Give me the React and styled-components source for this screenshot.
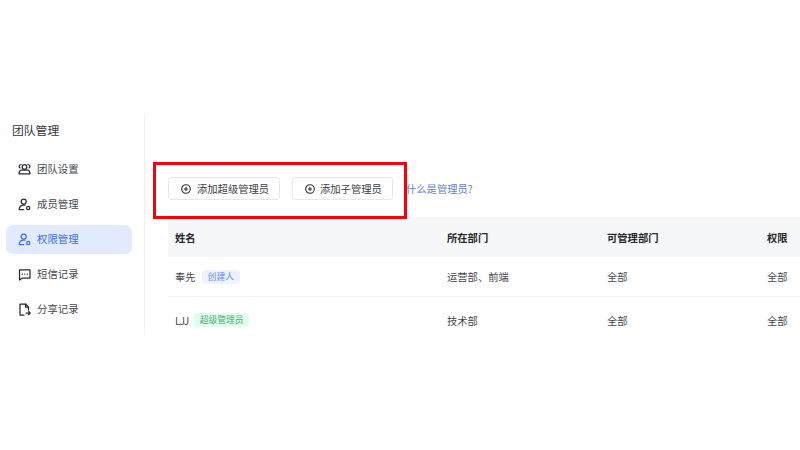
import React from "react";
import styled, { createGlobalStyle } from "styled-components";

const Global = createGlobalStyle`
  html, body { margin: 0; padding: 0; background: #fff; }
  body { font-family: "Noto Sans CJK SC", "Inter", sans-serif; width: 800px; height: 450px; overflow: hidden; }
`;
const Page = styled.div`
  display: flex; width: 800px; height: 450px; padding-top: 114px; box-sizing: border-box; overflow: hidden; position: relative;
`;
const Sidebar = styled.aside`
  width: 145px; height: 221px; flex: none; box-sizing: border-box; border-right: 1px solid #f0f1f3; padding: 0 12px 0 6px;
`;
const Title = styled.h1`
  margin: 0 0 17px 6px; padding-top: 7px; font-size: 11.8px; line-height: 17px; font-weight: 400; color: #33363c;
`;
const NavItem = styled.div`
  height: 29px; margin-bottom: 6px; display: flex; align-items: center; gap: 6px; padding-left: 12px; border-radius: 7px;
  font-size: 10.4px; color: ${p => p.$active ? "#3d6ff0" : "#45484e"};
  background: ${p => p.$active ? "#e2ebfd" : "transparent"};
  svg { width: 13px; height: 13px; flex: none; color: ${p => p.$active ? "#3d6ff0" : "#2b2d31"}; }
`;
const NavLabel = styled.span`
  position: relative; top: -1px;
`;
const Main = styled.main`
  flex: none; width: 655px; padding: 63px 0 0 23px; box-sizing: border-box;
`;
const Toolbar = styled.div`
  display: flex; align-items: center; height: 23px; margin-bottom: 17px;
`;
const Button = styled.div`
  height: 23px; box-sizing: border-box; width: ${p => p.$w}px; margin-right: 12px; border: 1px solid #e6e7ea; border-radius: 3px;
  display: flex; align-items: center; padding-left: 12px; gap: 6px; font-size: 10.3px; color: #3a3d43;
  svg { width: 10px; height: 10px; flex: none; color: #2b2d31; }
`;
const SecondButton = styled(Button)`
  gap: 5px;
`;
const HelpLink = styled.span`
  font-size: 10.3px; color: #5f80cc; margin-left: 1px;
`;
const Row = styled.div`
  display: grid; grid-template-columns: 279px 160px 160px 100px; width: 699px; height: ${p => p.$h || 40}px; align-items: center; box-sizing: border-box;
  font-size: 10.3px; color: #45484e;
  background: ${p => p.$head ? "#f6f7f9" : "transparent"};
  border-bottom: ${p => p.$line ? "1px solid #f1f2f3" : "none"};
  font-weight: ${p => p.$head ? 600 : 400};
  ${p => p.$head ? "color: #26282c;" : ""}
`;
const NameCell = styled.div`
  display: flex; align-items: center; gap: 6px; padding-left: 7px;
`;
const LatinName = styled.span`
  letter-spacing: -1px;
`;
const Cell = styled.div``;
const Tag = styled.span`
  height: 14px; line-height: 14px; padding: 0 ${p => p.$green ? 5.5 : 6}px; border-radius: 3px; font-size: 8.8px;
  color: ${p => p.$green ? "#35b56f" : "#5f8cf2"};
  background: ${p => p.$green ? "#e5fbee" : "#edf2fe"};
`;
const Annotation = styled.div`
  position: absolute; left: 153px; top: 162px; width: 254px; height: 57px; box-sizing: border-box; border: 3px solid #f5000a; pointer-events: none;
`;

const s = { fill: "none", stroke: "currentColor", strokeWidth: 1.25, strokeLinecap: "round", strokeLinejoin: "round" };
const TeamIcon = () => (
  <svg viewBox="0 0 13 13" {...s}><circle cx="6.5" cy="4" r="2.3"/><path d="M3 1.500a1.900 1.900 0 0 0-1 3.500M10 1.500a1.900 1.900 0 0 1 1 3.500M1 10.800c0-1.900.7-3.300 2.300-3.800h6.400c1.600.5 2.300 1.900 2.300 3.800H1z"/></svg>
);
const UserGearIcon = () => (
  <svg viewBox="0 0 13 13" {...s}><circle cx="5.700" cy="3.600" r="2.500"/><path d="M1.200 11.500c0-2.800 1.900-4.500 4.500-4.500.5 0 1 .1 1.400.2M1.200 11.500h4.500"/><circle cx="10.200" cy="10" r="1.600"/></svg>
);
const ChatIcon = () => (
  <svg viewBox="0 0 13 13" {...s}><path d="M1.500 1.800h10.500v8.400H4L1.500 12z"/><path d="M4.200 6h.2M6.700 6h.2M9.200 6h.2"/></svg>
);
const ShareIcon = () => (
  <svg viewBox="0 0 13 13" {...s}><path d="M6 12H2V1h5.500L10.500 4v3"/><path d="M7.500 1v3h3M8 10h4.200M10.700 8.500l1.500 1.500-1.500 1.500"/></svg>
);
const PlusIcon = () => (
  <svg viewBox="0 0 10 10" fill="none" stroke="currentColor" strokeWidth="1.1"><circle cx="5" cy="5" r="4.300"/><path d="M3 5h4M5 3v4"/></svg>
);

export default function App() {
  return (
    <>
      <Global />
      <Page>
        <Sidebar>
          <Title>团队管理</Title>
          <NavItem><TeamIcon /><NavLabel>团队设置</NavLabel></NavItem>
          <NavItem><UserGearIcon /><NavLabel>成员管理</NavLabel></NavItem>
          <NavItem $active><UserGearIcon /><NavLabel>权限管理</NavLabel></NavItem>
          <NavItem><ChatIcon /><NavLabel>短信记录</NavLabel></NavItem>
          <NavItem><ShareIcon /><NavLabel>分享记录</NavLabel></NavItem>
        </Sidebar>
        <Main>
          <Toolbar>
            <Button $w={112}><PlusIcon />添加超级管理员</Button>
            <SecondButton $w={101}><PlusIcon />添加子管理员</SecondButton>
            <HelpLink>什么是管理员?</HelpLink>
          </Toolbar>
          <Row $head>
            <NameCell>姓名</NameCell><Cell>所在部门</Cell><Cell>可管理部门</Cell><Cell>权限</Cell>
          </Row>
          <Row $line>
            <NameCell>奉先<Tag>创建人</Tag></NameCell><Cell>运营部、前端</Cell><Cell>全部</Cell><Cell>全部</Cell>
          </Row>
          <Row $h={46}>
            <NameCell><LatinName>LJJ</LatinName><Tag $green>超级管理员</Tag></NameCell><Cell>技术部</Cell><Cell>全部</Cell><Cell>全部</Cell>
          </Row>
        </Main>
        <Annotation />
      </Page>
    </>
  );
}
